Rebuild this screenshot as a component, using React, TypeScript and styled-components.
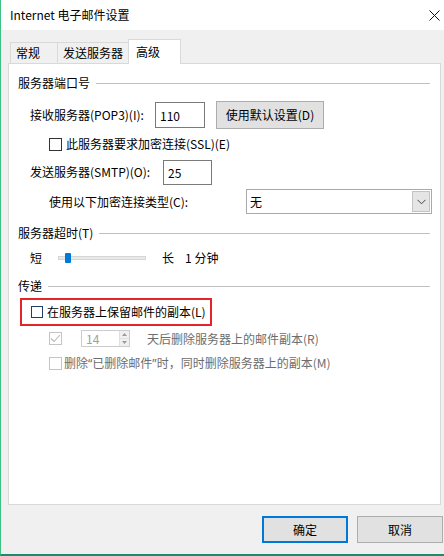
import React from "react";
import styled, { createGlobalStyle } from "styled-components";

const FONT = `"Noto Sans CJK SC", "Noto Sans", "DejaVu Sans", sans-serif`;

const Global = createGlobalStyle`
  html, body { margin: 0; padding: 0; background: #f0f0f0; }
  body { font-family: ${FONT}; font-size: 12px; color: #000; }
  * { box-sizing: border-box; }
`;

const Window = styled.div`
  width: 444px;
  height: 556px;
  border-left: 1px solid #3cc283;
  border-bottom: 2px solid #1b8c6c;
  display: flex;
  flex-direction: column;
  background: #f0f0f0;
  overflow: hidden;
`;

const TitleBar = styled.div`
  height: 30px;
  flex-shrink: 0;
  background: #fff;
  display: flex;
  align-items: center;
  justify-content: space-between;
  padding: 0 4px 0 9px;
`;

const Title = styled.span`
  font-size: 12px;
  line-height: 14px;
  color: #000;
`;

const Body = styled.div`
  flex: 1;
  display: flex;
  flex-direction: column;
  padding: 9px 0 0 7px;
`;

const TabStrip = styled.div`
  display: flex;
  align-items: flex-start;
  height: 25px;
  padding-left: 2px;
  margin-bottom: -1px;
  position: relative;
  z-index: 1;
`;

const Tab = styled.div<{ $active?: boolean; $w: number }>`
  width: ${(p) => p.$w}px;
  height: ${(p) => (p.$active ? 25 : 21)}px;
  margin-top: ${(p) => (p.$active ? 0 : 3)}px;
  margin-left: -1px;
  &:first-child { margin-left: 0; }
  border: 1px solid #d9d9d9;
  border-bottom: none;
  background: ${(p) => (p.$active ? "#fff" : "#f0f0f0")};
  position: relative;
  z-index: ${(p) => (p.$active ? 2 : 1)};
  display: flex;
  align-items: center;
  padding-left: ${(p) => (p.$active ? 7 : 5)}px;
  padding-bottom: ${(p) => (p.$active ? 1 : 0)}px;
  font-size: 12px;
  line-height: 14px;
`;

const Panel = styled.div`
  width: 433px;
  height: 442px;
  flex-shrink: 0;
  background: #fff;
  border: 1px solid #d9d9d9;
  display: flex;
  flex-direction: column;
  padding: 0 9px;
`;

const Row = styled.div<{ $h: number; $mt: number; $ml?: number }>`
  height: ${(p) => p.$h}px;
  margin-top: ${(p) => p.$mt}px;
  margin-left: ${(p) => p.$ml ?? 0}px;
  display: flex;
  align-items: center;
  flex-shrink: 0;
`;

const GroupTitle = styled.span`
  font-size: 12px;
  line-height: 14px;
  white-space: nowrap;
`;

const GroupLine = styled.div`
  flex: 1;
  height: 1px;
  background: #c0c0c0;
  margin-left: 6px;
  margin-right: 1px;
`;

const Label = styled.span<{ $w?: number; $muted?: boolean }>`
  ${(p) => (p.$w ? `width: ${p.$w}px; flex-shrink: 0;` : "")}
  font-size: 12px;
  line-height: 14px;
  white-space: nowrap;
  color: ${(p) => (p.$muted ? "#6d6d6d" : "#000")};
`;

const Quote = styled.span`
  font-family: "Noto Sans", "DejaVu Sans", sans-serif;
`;

const TextBox = styled.div<{ $w: number; $h: number }>`
  width: ${(p) => p.$w}px;
  height: ${(p) => p.$h}px;
  border: 1px solid #7a7a7a;
  background: #fff;
  display: flex;
  align-items: center;
  padding-left: 4px;
  font-size: 12px;
  flex-shrink: 0;
`;

const PushButton = styled.div<{ $w: number; $h: number; $default?: boolean }>`
  width: ${(p) => p.$w}px;
  height: ${(p) => p.$h}px;
  background: #e1e1e1;
  border: ${(p) => (p.$default ? "2px solid #0078d7" : "1px solid #adadad")};
  display: flex;
  align-items: center;
  justify-content: center;
  font-size: 12px;
  line-height: 14px;
  flex-shrink: 0;
`;

const Check = styled.span<{ $tone: "normal" | "focus" | "disabled"; $size: number }>`
  width: ${(p) => p.$size}px;
  height: ${(p) => p.$size}px;
  flex-shrink: 0;
  background: #fff;
  border: 1px solid
    ${(p) => (p.$tone === "disabled" ? "#c4c4c4" : p.$tone === "focus" ? "#1f3f6b" : "#333")};
  display: flex;
  align-items: center;
  justify-content: center;
`;

const Select = styled.div`
  width: 186px;
  height: 25px;
  border: 1px solid #a9a9a9;
  background: #fff;
  display: flex;
  align-items: center;
  justify-content: space-between;
  padding: 0 1px 0 3px;
  flex-shrink: 0;
  font-size: 12px;
`;

const DropButton = styled.div`
  width: 18px;
  height: 21px;
  background: #e5e5e5;
  border: 1px solid #c3c3c3;
  display: flex;
  align-items: center;
  justify-content: center;
`;

const Track = styled.div`
  width: 88px;
  height: 4px;
  margin: 0 16px 0 16px;
  background: #e7eaea;
  border: 1px solid #d6d6d6;
  position: relative;
  flex-shrink: 0;
`;

const Thumb = styled.div`
  position: absolute;
  left: 6px;
  top: -4px;
  width: 6px;
  height: 10px;
  border-radius: 1px;
  background: #007ad9;
`;

const FocusFrame = styled.div`
  width: 192px;
  height: 28px;
  border: 2px solid #e4262a;
  display: flex;
  align-items: center;
  padding-left: 9px;
  gap: 4px;
  flex-shrink: 0;
`;

const Spin = styled.div`
  width: 49px;
  height: 17px;
  border: 1px solid #cccccc;
  display: flex;
  align-items: stretch;
  flex-shrink: 0;
  margin: 0 17px 0 19px;
`;

const SpinValue = styled.span`
  flex: 1;
  display: flex;
  align-items: center;
  padding-left: 4px;
  color: #a0a0a0;
  font-size: 12px;
`;

const SpinButtons = styled.div`
  width: 10px;
  display: flex;
  flex-direction: column;
  border-left: 1px solid #e0e0e0;
`;

const SpinHalf = styled.div`
  flex: 1;
  background: #f0f0f0;
  display: flex;
  align-items: center;
  justify-content: center;
  & + & { border-top: 1px solid #e0e0e0; }
`;

const Footer = styled.div`
  display: flex;
  justify-content: flex-end;
  gap: 9px;
  padding: 11px 1px 0 0;
`;

const CloseIcon = () => (
  <svg width="11" height="11" viewBox="0 0 11 11">
    <path d="M0.5 0.5 L10.5 10.5 M10.5 0.5 L0.5 10.5" stroke="#111" strokeWidth="1" fill="none" />
  </svg>
);

const Chevron = () => (
  <svg width="9" height="6" viewBox="0 0 9 6">
    <path d="M0.5 0.8 L4.5 4.8 L8.5 0.8" stroke="#444" strokeWidth="1" fill="none" />
  </svg>
);

const Tick = () => (
  <svg width="11" height="9" viewBox="0 0 11 9">
    <path d="M1 4.5 L4 7.5 L10 1" stroke="#b8b8b8" strokeWidth="1.1" fill="none" />
  </svg>
);

const Arrow = ({ up }: { up?: boolean }) => (
  <svg width="5" height="3" viewBox="0 0 5 3">
    <path d={up ? "M0 3 L2.5 0 L5 3 Z" : "M0 0 L2.5 3 L5 0 Z"} fill="#9a9a9a" />
  </svg>
);

export default function App() {
  return (
    <>
      <Global />
      <Window>
        <TitleBar>
          <Title>Internet 电子邮件设置</Title>
          <CloseIcon />
        </TitleBar>
        <Body>
          <TabStrip>
            <Tab $w={48}>常规</Tab>
            <Tab $w={72}>发送服务器</Tab>
            <Tab $w={53} $active>
              高级
            </Tab>
          </TabStrip>
          <Panel>
            <Row $h={14} $mt={12}>
              <GroupTitle>服务器端口号</GroupTitle>
              <GroupLine />
            </Row>
            <Row $h={28} $mt={11} $ml={12}>
              <Label $w={125}>接收服务器(POP3)(I):</Label>
              <TextBox $w={50} $h={26}>110</TextBox>
              <PushButton $w={108} $h={28} style={{ marginLeft: 11 }}>
                使用默认设置(D)
              </PushButton>
            </Row>
            <Row $h={14} $mt={8} $ml={31}>
              <Check $tone="normal" $size={13} />
              <Label style={{ marginLeft: 4 }}>此服务器要求加密连接(SSL)(E)</Label>
            </Row>
            <Row $h={26} $mt={8} $ml={12}>
              <Label $w={133}>发送服务器(SMTP)(O):</Label>
              <TextBox $w={49} $h={25}>25</TextBox>
            </Row>
            <Row $h={25} $mt={4} $ml={31}>
              <Label $w={197}>使用以下加密连接类型(C):</Label>
              <Select>
                <span>无</span>
                <DropButton>
                  <Chevron />
                </DropButton>
              </Select>
            </Row>
            <Row $h={14} $mt={12}>
              <GroupTitle>服务器超时(T)</GroupTitle>
              <GroupLine />
            </Row>
            <Row $h={16} $mt={10} $ml={12}>
              <Label>短</Label>
              <Track>
                <Thumb />
              </Track>
              <Label>长</Label>
              <Label style={{ marginLeft: 11 }}>1 分钟</Label>
            </Row>
            <Row $h={14} $mt={13}>
              <GroupTitle>传递</GroupTitle>
              <GroupLine />
            </Row>
            <Row $h={28} $mt={5} $ml={2}>
              <FocusFrame>
                <Check $tone="focus" $size={12} />
                <Label>在服务器上保留邮件的副本(L)</Label>
              </FocusFrame>
            </Row>
            <Row $h={17} $mt={4} $ml={31}>
              <Check $tone="disabled" $size={13}>
                <Tick />
              </Check>
              <Spin>
                <SpinValue>14</SpinValue>
                <SpinButtons>
                  <SpinHalf>
                    <Arrow up />
                  </SpinHalf>
                  <SpinHalf>
                    <Arrow />
                  </SpinHalf>
                </SpinButtons>
              </Spin>
              <Label $muted>天后删除服务器上的邮件副本(R)</Label>
            </Row>
            <Row $h={14} $mt={9} $ml={31}>
              <Check $tone="disabled" $size={13} />
              <Label $muted style={{ marginLeft: 2 }}>
                删除<Quote>“</Quote>已删除邮件<Quote>”</Quote>时，同时删除服务器上的副本(M)
              </Label>
            </Row>
          </Panel>
          <Footer>
            <PushButton $w={86} $h={27} $default>
              确定
            </PushButton>
            <PushButton $w={86} $h={27}>
              取消
            </PushButton>
          </Footer>
        </Body>
      </Window>
    </>
  );
}
